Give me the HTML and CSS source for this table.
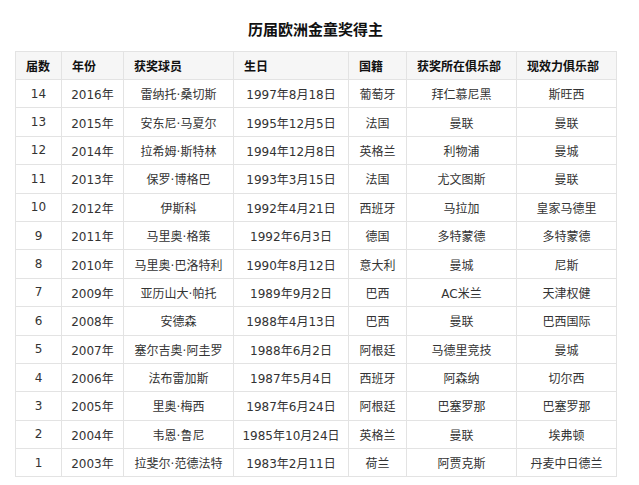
FILE: index.html
```html
<!DOCTYPE html>
<html lang="zh-CN">
<head>
<meta charset="utf-8">
<title>历届欧洲金童奖得主</title>
<link rel="stylesheet" href="styles.css">
</head>
<body>
<div class="page">
  <h1 class="title">历届欧洲金童奖得主</h1>
  <table class="winners">
    <colgroup>
      <col class="c1"><col class="c2"><col class="c3"><col class="c4"><col class="c5"><col class="c6"><col class="c7">
    </colgroup>
    <thead>
      <tr><th>届数</th><th>年份</th><th>获奖球员</th><th>生日</th><th>国籍</th><th>获奖所在俱乐部</th><th>现效力俱乐部</th></tr>
    </thead>
    <tbody>
      <tr><td>14</td><td>2016年</td><td>雷纳托·桑切斯</td><td>1997年8月18日</td><td>葡萄牙</td><td>拜仁慕尼黑</td><td>斯旺西</td></tr>
      <tr><td>13</td><td>2015年</td><td>安东尼·马夏尔</td><td>1995年12月5日</td><td>法国</td><td>曼联</td><td>曼联</td></tr>
      <tr><td>12</td><td>2014年</td><td>拉希姆·斯特林</td><td>1994年12月8日</td><td>英格兰</td><td>利物浦</td><td>曼城</td></tr>
      <tr><td>11</td><td>2013年</td><td>保罗·博格巴</td><td>1993年3月15日</td><td>法国</td><td>尤文图斯</td><td>曼联</td></tr>
      <tr><td>10</td><td>2012年</td><td>伊斯科</td><td>1992年4月21日</td><td>西班牙</td><td>马拉加</td><td>皇家马德里</td></tr>
      <tr><td>9</td><td>2011年</td><td>马里奥·格策</td><td>1992年6月3日</td><td>德国</td><td>多特蒙德</td><td>多特蒙德</td></tr>
      <tr><td>8</td><td>2010年</td><td>马里奥·巴洛特利</td><td>1990年8月12日</td><td>意大利</td><td>曼城</td><td>尼斯</td></tr>
      <tr><td>7</td><td>2009年</td><td>亚历山大·帕托</td><td>1989年9月2日</td><td>巴西</td><td>AC米兰</td><td>天津权健</td></tr>
      <tr><td>6</td><td>2008年</td><td>安德森</td><td>1988年4月13日</td><td>巴西</td><td>曼联</td><td>巴西国际</td></tr>
      <tr><td>5</td><td>2007年</td><td>塞尔吉奥·阿圭罗</td><td>1988年6月2日</td><td>阿根廷</td><td>马德里竞技</td><td>曼城</td></tr>
      <tr><td>4</td><td>2006年</td><td>法布雷加斯</td><td>1987年5月4日</td><td>西班牙</td><td>阿森纳</td><td>切尔西</td></tr>
      <tr><td>3</td><td>2005年</td><td>里奥·梅西</td><td>1987年6月24日</td><td>阿根廷</td><td>巴塞罗那</td><td>巴塞罗那</td></tr>
      <tr><td>2</td><td>2004年</td><td>韦恩·鲁尼</td><td>1985年10月24日</td><td>英格兰</td><td>曼联</td><td>埃弗顿</td></tr>
      <tr><td>1</td><td>2003年</td><td>拉斐尔·范德法特</td><td>1983年2月11日</td><td>荷兰</td><td>阿贾克斯</td><td>丹麦中日德兰</td></tr>
    </tbody>
  </table>
</div>
</body>
</html>
```
FILE: styles.css
```css
html, body {
  margin: 0;
  padding: 0;
  background: #ffffff;
}

body {
  font-family: "DejaVu Sans", "Noto Sans CJK SC", sans-serif;
  font-size: 12px;
  color: #333333;
}

.page {
  padding: 18px 0 0 15px;
  width: 601px;
}

.title {
  margin: 0 0 12px 0;
  height: 21px;
  line-height: 21px;
  text-align: center;
  font-family: "Noto Sans CJK SC", sans-serif;
  font-size: 15px;
  font-weight: bold;
  color: #111111;
}

.winners {
  border-collapse: collapse;
  table-layout: fixed;
  width: 601px;
}

.c1 { width: 46px; }
.c2 { width: 62px; }
.c3 { width: 110px; }
.c4 { width: 115px; }
.c5 { width: 58px; }
.c6 { width: 110px; }
.c7 { width: 100px; }

.winners th,
.winners td {
  border: 1px solid #e3e3e3;
  padding: 0;
  vertical-align: middle;
  white-space: nowrap;
}

.winners thead tr {
  height: 28px;
}

.winners th {
  background: #f6f6f6;
  text-align: left;
  padding-left: 10px;
  font-family: "Noto Sans CJK SC", sans-serif;
  font-weight: bold;
  color: #111111;
}

.winners tbody tr {
  height: 28.4px;
}

.winners td {
  text-align: center;
}
```
